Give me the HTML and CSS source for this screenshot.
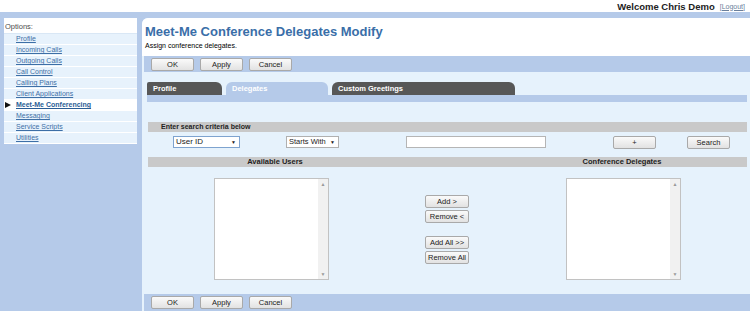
FILE: index.html
```html
<!DOCTYPE html>
<html>
<head>
	<title>Meet-Me Conference Delegates Modify</title>
	<link rel="stylesheet" href="styles.css">
</head>
<body>
	<header class="topbar">
		<span class="welcome">Welcome Chris Demo</span>
		<a href="#" class="logout">[Logout]</a>
	</header>
	<div class="layout">
		<nav class="sidebar">
			<div class="options-title">Options:</div>
			<ul class="menu">
				<li><a href="#">Profile</a></li>
				<li><a href="#">Incoming Calls</a></li>
				<li><a href="#">Outgoing Calls</a></li>
				<li><a href="#">Call Control</a></li>
				<li><a href="#">Calling Plans</a></li>
				<li><a href="#">Client Applications</a></li>
				<li class="active"><a href="#">Meet-Me Conferencing</a></li>
				<li><a href="#">Messaging</a></li>
				<li><a href="#">Service Scripts</a></li>
				<li><a href="#">Utilities</a></li>
			</ul>
		</nav>
		<main class="content">
			<div class="page-head">
				<h1>Meet-Me Conference Delegates Modify</h1>
				<p>Assign conference delegates.</p>
			</div>
			<div class="button-bar">
				<button class="btn">OK</button>
				<button class="btn">Apply</button>
				<button class="btn">Cancel</button>
			</div>
			<div class="body">
				<div class="tabs">
					<div class="tab tab-profile">Profile</div>
					<div class="tab tab-current">Delegates</div>
					<div class="tab tab-greetings">Custom Greetings</div>
				</div>
				<div class="tab-strip"></div>

				<div class="section-head search-head">Enter search criteria below</div>
				<div class="search-row">
					<div class="select select-field">User ID <span class="arrow">&#9660;</span></div>
					<div class="select select-mode">Starts With <span class="arrow">&#9660;</span></div>
					<input class="search-input" type="text">
					<button class="btn btn-plus">+</button>
					<button class="btn btn-search">Search</button>
				</div>

				<div class="section-head columns-head">
					<span class="col-left">Available Users</span>
					<span class="col-mid"></span>
					<span class="col-right">Conference Delegates</span>
				</div>
				<div class="columns">
					<div class="col-left">
						<div class="listbox"><div class="scroll"><span>&#9650;</span><span>&#9660;</span></div></div>
					</div>
					<div class="col-mid">
						<button class="btn btn-move">Add &gt;</button>
						<button class="btn btn-move">Remove &lt;</button>
						<button class="btn btn-move spaced">Add All &gt;&gt;</button>
						<button class="btn btn-move">Remove All</button>
					</div>
					<div class="col-right">
						<div class="listbox"><div class="scroll"><span>&#9650;</span><span>&#9660;</span></div></div>
					</div>
				</div>
			</div>
			<div class="button-bar bottom">
				<button class="btn">OK</button>
				<button class="btn">Apply</button>
				<button class="btn">Cancel</button>
			</div>
		</main>
	</div>
</body>
</html>
```

FILE: styles.css
```css
/* General styles */
body {
	font-family: "Liberation Sans", Arial, sans-serif;
	font-size: 8px;
	margin: 0;
	padding: 0;
	color: #000;
	background-color: #fff;
}

.topbar {
	height: 12px;
	display: flex;
	justify-content: flex-end;
	align-items: center;
	padding-right: 5px;
	gap: 5px;
}

.welcome {
	font-size: 9.5px;
	font-weight: bold;
	color: #222;
}

.logout {
	font-size: 7px;
	color: #6a7f9c;
}

.layout {
	display: flex;
	background-color: #b5cae9;
	padding-top: 6px;
	height: 293px;
}

/* Sidebar */
.sidebar {
	width: 133px;
	margin-left: 4px;
	align-self: flex-start;
	background-color: #e7f2fc;
}

.options-title {
	height: 15px;
	line-height: 18px;
	font-size: 7.5px;
	color: #4b4b4b;
	padding-left: 1px;
	background-color: #fff;
	border-bottom: 1px solid #d9e7f5;
}

.menu {
	list-style: none;
	margin: 0;
	padding: 0;
}

.menu li {
	height: 10px;
	line-height: 10px;
	padding-left: 12px;
	border-bottom: 1px solid #fff;
	position: relative;
}

.menu a {
	color: #3d6fa6;
	font-size: 7px;
}

.menu li.active {
	background-color: #fff;
}

.menu li.active a {
	font-weight: bold;
	color: #2a5d95;
}

.menu li.active::before {
	content: "";
	position: absolute;
	left: 1px;
	top: 2px;
	border-left: 6px solid #111;
	border-top: 3px solid transparent;
	border-bottom: 3px solid transparent;
}

/* Main content */
.content {
	margin-left: 5px;
	flex: 1;
	display: flex;
	flex-direction: column;
	background-color: #e6f2fc;
	border-top-left-radius: 6px;
	overflow: hidden;
}

.page-head {
	background-color: #fff;
	height: 38px;
	padding-left: 3px;
}

.page-head h1 {
	margin: 0;
	padding-top: 7px;
	font-size: 13px;
	line-height: 14px;
	color: #3a6ea8;
}

.page-head p {
	margin: 3px 0 0;
	font-size: 7px;
}

.button-bar {
	height: 16px;
	background-color: #b5cae9;
	margin-left: 2px;
	display: flex;
	align-items: center;
	padding-left: 7px;
	gap: 6px;
}

.button-bar.bottom {
	height: 17px;
	margin-top: auto;
	margin-left: 2px;
}

.btn {
	font-family: "Liberation Sans", Arial, sans-serif;
	font-size: 7.5px;
	height: 13px;
	width: 43px;
	padding: 0;
	background: linear-gradient(#fafafa, #e2e2e2);
	border: 1px solid #a9a9a9;
	border-radius: 2px;
	color: #222;
}

.body {
	padding: 10px 3px 0 5px;
}

/* Tabs */
.tabs {
	display: flex;
	gap: 4px;
	height: 13px;
}

.tab {
	font-weight: bold;
	font-size: 7.5px;
	line-height: 14px;
	padding-left: 6px;
	border-radius: 6px 6px 0 0;
	color: #fff;
}

.tab-profile {
	width: 69px;
	background-color: #575757;
	border-top-left-radius: 2px;
}

.tab-current {
	width: 96px;
	background-color: #b5cae9;
}

.tab-greetings {
	width: 177px;
	background-color: #575757;
}

.tab-strip {
	height: 7px;
	background-color: #b5cae9;
}

/* Sections */
.section-head {
	background-color: #c9c9c9;
	height: 10px;
	line-height: 10px;
	font-weight: bold;
	font-size: 7px;
	color: #222;
	margin-left: 1px;
}

.search-head {
	margin-top: 20px;
	padding-left: 13px;
}

.search-row {
	display: flex;
	align-items: center;
	height: 12px;
	margin-top: 4px;
	padding-left: 26px;
}

.select {
	height: 12px;
	box-sizing: border-box;
	background-color: #fff;
	border: 1px solid #b0b0b0;
	font-size: 8px;
	line-height: 10px;
	padding-left: 2px;
	position: relative;
	color: #222;
}

.arrow {
	position: absolute;
	right: 3px;
	top: 0;
	font-size: 5px;
}

.select-field {
	width: 67px;
	border-color: #7ea3cf;
}

.select-mode {
	width: 53px;
	margin-left: 46px;
	font-size: 7.5px;
}

.search-input {
	width: 140px;
	height: 12px;
	box-sizing: border-box;
	border: 1px solid #b5b5b5;
	margin-left: 67px;
	padding: 0;
}

.btn-plus {
	margin-left: 67px;
}

.btn-search {
	margin-left: 31px;
}

.columns-head {
	margin-top: 9px;
	display: flex;
	padding: 0;
	font-size: 7.5px;
}

.col-left {
	width: 254px;
	text-align: center;
}

.col-mid {
	width: 97px;
}

.col-right {
	width: 246px;
	text-align: center;
}

.columns {
	display: flex;
	margin-top: 11px;
	margin-left: 1px;
}

.listbox {
	width: 115px;
	height: 102px;
	box-sizing: border-box;
	margin: 0 auto;
	background-color: #fff;
	border: 1px solid #c2c2c2;
	display: flex;
	justify-content: flex-end;
}

.columns .col-left .listbox {
	margin-left: 66px;
}

.columns .col-right .listbox {
	margin-left: 67px;
}

.scroll {
	width: 10px;
	background-color: #f1f1f1;
	display: flex;
	flex-direction: column;
	justify-content: space-between;
	align-items: center;
	font-size: 5px;
	color: #999;
	padding: 2px 0;
}

.columns .col-mid {
	display: flex;
	flex-direction: column;
	align-items: flex-start;
	padding-top: 17px;
	padding-left: 23px;
	box-sizing: border-box;
	gap: 2px;
}

.btn-move {
	width: 44px;
}

.btn-move.spaced {
	margin-top: 11px;
}
```
